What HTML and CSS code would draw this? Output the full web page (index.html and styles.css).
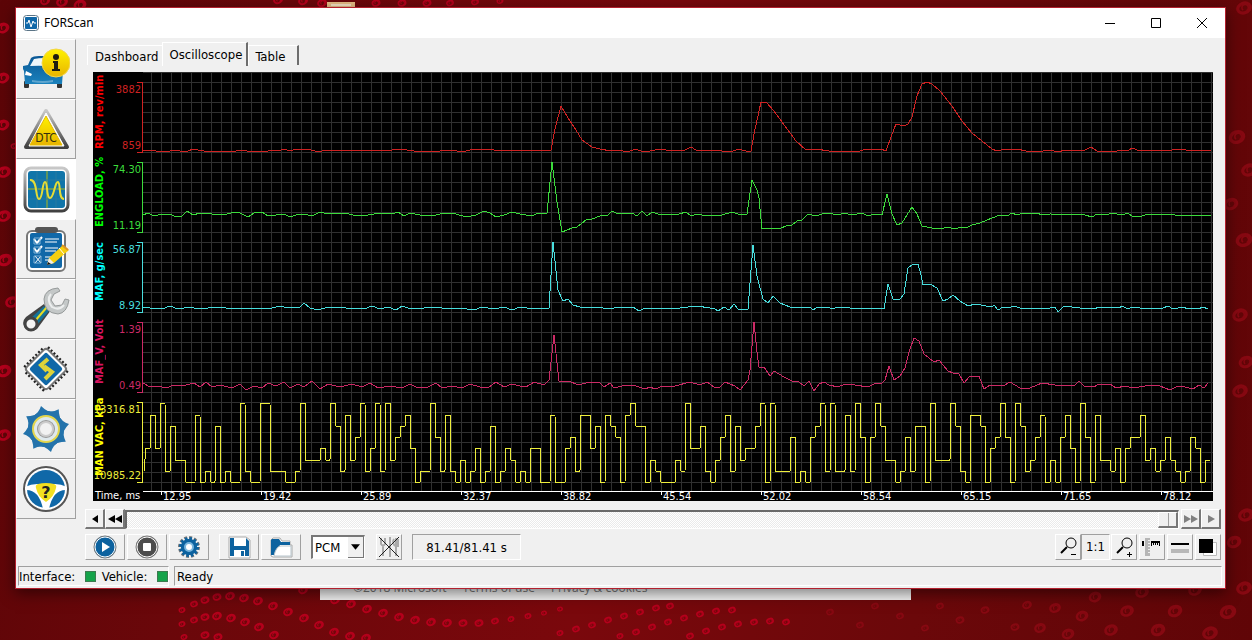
FILE: index.html
```html
<!DOCTYPE html>
<html lang="en">

<head>
    <meta charset="UTF-8">
    <meta name="viewport" content="width=device-width, initial-scale=1.0">
    <link rel="stylesheet" href="styles.css">
    <title>FORScan</title>
</head>

<body>
    <svg id="wallpaper" class="wallpaper" viewBox="0 0 1252 640" preserveAspectRatio="xMidYMin slice" aria-hidden="true">
        <defs>
            <g id="swirl" fill="none">
                <ellipse rx="4" ry="3" stroke-width="2" />
                <path d="M-1 1a2 2 0 1 1 2 1" stroke-width="1" />
            </g>
        </defs>
        <rect x="327" y="2" width="28" height="6" fill="#e8bd86" />
        <path d="M331 5h20" stroke="#f7e4c6" stroke-width="2" />
    </svg>

    <main class="window">
        <header class="titlebar">
            <svg class="app-icon" viewBox="0 0 16 16" aria-hidden="true">
                <rect x="0.5" y="0.5" width="15" height="15" rx="3" fill="#fff" stroke="#5b7486" />
                <rect x="2" y="2" width="12" height="12" rx="1" fill="#1068a8" />
                <path d="M3 8h2l1-3 2 7 2-6 1 2h2" fill="none" stroke="#fff" />
            </svg>
            <h1>FORScan</h1>
            <div class="window-buttons">
                <button aria-label="Minimize"><svg viewBox="0 0 10 10"><path d="M0 5.5h10" /></svg></button>
                <button aria-label="Maximize"><svg viewBox="0 0 10 10"><path d="M.5 .5h9v9h-9z" /></svg></button>
                <button aria-label="Close"><svg viewBox="0 0 10 10"><path d="M0 0l10 10M10 0L0 10" /></svg></button>
            </div>
        </header>

        <div class="workspace">
            <nav class="sidebar">
                <button aria-label="Vehicle information">
                    <svg viewBox="0 0 48 48">
                        <defs>
                            <linearGradient id="blue" x2="0" y2="1"><stop stop-color="#0a5795" /><stop offset="1" stop-color="#1b82bd" /></linearGradient>
                            <linearGradient id="yellow" x2="0" y2="1"><stop stop-color="#fff200" /><stop offset="1" stop-color="#e8b400" /></linearGradient>
                            <linearGradient id="steel" x2="0" y2="1"><stop stop-color="#c8c8c8" /><stop offset="1" stop-color="#404040" /></linearGradient>
                        </defs>
                        <rect x="2" y="36" width="5" height="7" rx="1" fill="#333" />
                        <rect x="35" y="36" width="5" height="7" rx="1" fill="#333" />
                        <path d="M1 21l5-1 3-7q2-2 8-2h14l6 10 4 5-1 13H3l-1-13-1-2z" fill="url(#blue)" />
                        <path d="M8 21l4-7q10-2 19 0l3 8q-13-2-26-1z" fill="#eef6fa" />
                        <path d="M4 26l6 3-1 2-6-1zM31 29l7-3v4l-7 1z" fill="#fff" />
                        <path d="M10 35q11 2 21 0v2q-10 2-21 0z" fill="#5fa6cf" />
                        <circle cx="34" cy="18" r="14" fill="url(#yellow)" stroke="#f3d64a" />
                        <circle cx="34" cy="12" r="3" fill="#1c1c10" />
                        <path d="M31 16h5v8h2v2h-8v-2h2v-6h-1z" fill="#1c1c10" />
                    </svg>
                </button>
                <button aria-label="DTC">
                    <svg viewBox="0 0 48 48">
                        <path d="M24 6L45 42H4z" fill="#fff" stroke="url(#steel)" stroke-width="4" stroke-linejoin="round" />
                        <path d="M24 8L42 41H7z" fill="#fff" stroke="#fff" stroke-linejoin="round" />
                        <path d="M24 11L40 40H8z" fill="url(#yellow)" stroke="#e6bb00" stroke-linejoin="round" />
                        <text x="24" y="37" text-anchor="middle" class="dtc-text">DTC</text>
                    </svg>
                </button>
                <button class="active" aria-label="Oscilloscope">
                    <svg viewBox="0 0 48 48">
                        <rect x="3" y="3" width="43" height="43" rx="6" fill="#fff" stroke="url(#steel)" stroke-width="3" />
                        <rect x="6" y="6" width="37" height="37" rx="3" fill="#1175a9" />
                        <path d="M6 24h37M25 6v37" stroke="#5f9560" stroke-width="2" />
                        <path d="M6 15h37M6 34h37M15 6v37M34 6v37" stroke="#287aa0" />
                        <path d="M8 15c8-1 5 19 9 19s3-17 6-17 1 16 5 16 5-17 8-16 0 17 6 17" fill="none" stroke="#e6dc35" stroke-width="2" />
                    </svg>
                </button>
                <button aria-label="Tests">
                    <svg viewBox="0 0 48 48">
                        <rect x="5" y="6" width="38" height="40" rx="5" fill="#fff" stroke="#777" stroke-width="2" />
                        <rect x="8" y="8" width="32" height="35" rx="2" fill="#1068a8" />
                        <rect x="13" y="2" width="23" height="6" rx="3" fill="#555" />
                        <g fill="none" stroke="#fff">
                            <path d="M23 14h14M23 17h12M23 23h13M23 26h11M23 32h8M23 35h6" />
                            <path d="M12 14l3 4 5-6M12 23l3 4 5-6" stroke-width="2" />
                            <path d="M13 31l6 7M19 31l-6 7" />
                            <path d="M12 13h6v6h-6zM12 22h6v6h-6zM12 31h7v7h-7z" stroke="#7fb2d6" />
                        </g>
                        <path d="M25 40l2-7 14-13 6 5-15 13z" fill="#f5cf10" />
                        <path d="M25 40l2-7 5 5z" fill="#eee" />
                        <path d="M25 40l1-3 3 2z" fill="#111" />
                        <path d="M37 23l5 6" stroke="#fff" />
                        <path d="M40 20l6 5" stroke="#e09422" stroke-width="2" />
                    </svg>
                </button>
                <button aria-label="Service functions">
                    <svg viewBox="0 0 48 48">
                        <path d="M22 19l7 6-14 19q-6 4-12-1-4-6 1-11z" fill="#444" />
                        <path d="M22 21l5 5-12 14-6-7z" fill="#147398" />
                        <path d="M25 22L13 36" stroke="#e7dd23" stroke-width="2" />
                        <circle cx="9" cy="39" r="6" fill="#f4f4f4" stroke="#444" stroke-width="3" />
                        <path d="M36 3Q23 4 22 14q0 14 14 15 9-1 11-14l-4-1-3 6-7 1-4-6 3-6 6-3z" fill="#c4c8c8" stroke="#969a9a" />
                        <path d="M29 9q-5 6 1 13 7 4 12-2" fill="none" stroke="#eceeee" stroke-width="2" />
                    </svg>
                </button>
                <button aria-label="Module configuration">
                    <svg viewBox="0 0 48 48">
                        <g transform="rotate(45 24 24)">
                            <rect x="10" y="10" width="28" height="28" fill="none" stroke="#222" stroke-width="8" stroke-dasharray="2 2" />
                            <rect x="9" y="9" width="30" height="30" rx="3" fill="#fff" stroke="#777" stroke-width="2" />
                            <rect x="12" y="12" width="24" height="24" rx="2" fill="#1068a8" />
                        </g>
                        <path d="M26 14l-7 6 6 6M22 21l8 6-7 7" fill="none" stroke="#ddd33a" stroke-width="4" />
                    </svg>
                </button>
                <button aria-label="Settings">
                    <svg viewBox="0 0 48 48">
                        <defs>
                            <path id="tooth" d="M10 12Q17 8 19 1Q25 7 34 9L24 24z" fill="#2473ab" />
                        </defs>
                        <use href="#tooth" />
                        <use href="#tooth" transform="rotate(45 24 24)" />
                        <use href="#tooth" transform="rotate(90 24 24)" />
                        <use href="#tooth" transform="rotate(135 24 24)" />
                        <use href="#tooth" transform="rotate(180 24 24)" />
                        <use href="#tooth" transform="rotate(225 24 24)" />
                        <use href="#tooth" transform="rotate(270 24 24)" />
                        <use href="#tooth" transform="rotate(315 24 24)" />
                        <circle cx="24" cy="24" r="18" fill="#2473ab" />
                        <circle cx="24" cy="24" r="13" fill="#dfe9ed" stroke="#e3d64e" stroke-width="2" />
                        <circle cx="24" cy="24" r="9" fill="#999" />
                        <circle cx="24" cy="24" r="7" fill="#f2f2f2" stroke="#ccc" stroke-width="2" />
                    </svg>
                </button>
                <button aria-label="Help">
                    <svg viewBox="0 0 48 48">
                        <circle cx="24" cy="24" r="22" fill="#fff" stroke="#555" stroke-width="2" />
                        <circle cx="24" cy="24" r="19" fill="#1068a8" />
                        <path d="M3 22q6-3 12-3h18q6 0 12 3v3q-14-1-18 19h-6Q17 24 3 25z" fill="#fff" />
                        <path d="M16 19q8-2 16 0 3 1 2 4-2 9-10 14-8-5-10-14-1-3 2-4z" fill="#f2df20" />
                        <text x="24" y="33" text-anchor="middle" class="help-text">?</text>
                    </svg>
                </button>
            </nav>

            <section class="content">
                <div class="tabs">
                    <button class="tab">Dashboard</button>
                    <button class="tab selected">Oscilloscope</button>
                    <button class="tab">Table</button>
                </div>

                <div class="scope">
                    <div class="channels">
                        <div class="channel rpm"><b>RPM, rev/min</b><div class="range"><span>3882</span><span>859</span></div></div>
                        <div class="channel load"><b>ENGLOAD, %</b><div class="range"><span>74.30</span><span>11.19</span></div></div>
                        <div class="channel maf"><b>MAF, g/sec</b><div class="range"><span>56.87</span><span>8.92</span></div></div>
                        <div class="channel volt"><b>MAF_V, Volt</b><div class="range"><span>1.39</span><span>0.49</span></div></div>
                        <div class="channel vac"><b>MAN VAC, kPa</b><div class="range"><span>13316.81</span><span>10985.22</span></div></div>
                    </div>
                    <div class="plot">
                        <svg id="traces"></svg>
                    </div>
                    <div class="axis-name">Time, ms</div>
                    <div class="axis" id="axis"></div>
                </div>

                <div class="scroll-row">
                    <button class="raised" aria-label="Back"><svg viewBox="0 0 16 10"><path d="M5 5l6-4v8z" /></svg></button>
                    <button class="raised" aria-label="Fast back"><svg viewBox="0 0 16 10"><path d="M1 5l7-4v8zM8 5l7-4v8z" /></svg></button>
                    <input type="range" aria-label="Position" min="0" max="8141" value="8141">
                    <button class="raised dim" aria-label="Fast forward"><svg viewBox="0 0 16 10"><path d="M1 1l7 4-7 4zM8 1l7 4-7 4z" /></svg></button>
                    <button class="raised dim" aria-label="Forward"><svg viewBox="0 0 16 10"><path d="M5 1l7 4-7 4z" /></svg></button>
                </div>

                <div class="toolbar">
                    <div class="group">
                        <button class="raised wide" aria-label="Start">
                            <svg viewBox="0 0 24 24"><circle cx="12" cy="12" r="11" fill="#0c629f" stroke="#777" /><circle cx="12" cy="12" r="10" fill="none" stroke="#fff" /><path d="M9 7l8 5-8 5z" fill="#fff" /></svg>
                        </button>
                        <button class="raised wide" aria-label="Stop">
                            <svg viewBox="0 0 24 24"><circle cx="12" cy="12" r="11" fill="#4d4d4d" stroke="#777" /><circle cx="12" cy="12" r="10" fill="none" stroke="#fff" /><rect x="8" y="8" width="8" height="8" rx="1" fill="#fff" /></svg>
                        </button>
                        <button class="raised wide" aria-label="Options">
                            <svg viewBox="0 0 24 24"><circle cx="12" cy="12" r="9" fill="none" stroke="#777" stroke-width="4" stroke-dasharray="2.7 2" /><circle cx="12" cy="12" r="8" fill="#0c629f" stroke="#0c629f" stroke-width="4" stroke-dasharray="2.4 1.8" /><circle cx="12" cy="12" r="8" fill="#0c629f" /><circle cx="12" cy="12" r="4" fill="#fff" stroke="#79b5dc" stroke-width="2" /></svg>
                        </button>
                    </div>
                    <div class="group">
                        <button class="raised wide" aria-label="Save">
                            <svg viewBox="0 0 24 24"><path d="M2 2h17l4 3v18H2z" fill="#fff" stroke="#aaa" /><path d="M3 3h4v8h12V3l3 3v15H3z" fill="#0c629f" /><path d="M7 15h11v7H7z" fill="#fff" /><path d="M14 16h3v5h-3z" fill="#0c629f" /></svg>
                        </button>
                        <button class="raised wide" aria-label="Open">
                            <svg viewBox="0 0 24 24"><path d="M2 21V5l2-2h7l2 3h8v4h2v12H4z" fill="#fff" stroke="#aaa" /><path d="M2 20V5l1-1h7l2 3h9v3H11l-6 10z" fill="#0c629f" /><path d="M5 21q2-10 7-10h10v10z" fill="#fff" stroke="#b8c5cc" /></svg>
                        </button>
                    </div>
                    <div class="module">
                        <select aria-label="Module"><option>PCM</option></select>
                        <svg viewBox="0 0 10 6" aria-hidden="true"><path d="M0 0h10L5 6z" /></svg>
                    </div>
                    <button class="raised" aria-label="Hide controls">
                        <svg viewBox="0 0 22 22"><path d="M3 2v6q2 3 4 0V2M5 9v11M12 1v20M18 2v18M16 3q-2 4 1 7M20 3v8" fill="none" stroke="#aaa" stroke-width="2" /><path d="M1 1l20 20M21 1L1 21" stroke="#222" /></svg>
                    </button>
                    <output class="time">81.41/81.41 s</output>
                    <div class="view-tools">
                        <button class="raised" aria-label="Zoom out">
                            <svg viewBox="0 0 22 22"><circle cx="14" cy="7" r="5" fill="none" stroke="#000" /><path d="M10 11l-6 6" stroke="#000" stroke-width="2" /><path d="M14 18.5h5" stroke="#000" /></svg>
                        </button>
                        <button class="sunken">1:1</button>
                        <button class="raised" aria-label="Zoom in">
                            <svg viewBox="0 0 22 22"><circle cx="14" cy="7" r="5" fill="none" stroke="#000" /><path d="M10 11l-6 6" stroke="#000" stroke-width="2" /><path d="M14 18.5h5M16.5 16v5" stroke="#000" /></svg>
                        </button>
                        <button class="raised" aria-label="Rulers">
                            <svg viewBox="0 0 22 22"><path d="M4 2h5v18H4z" fill="#b5b5b5" /><path d="M7 4.5h2M7 7.5h2M7 10.5h2M7 13.5h2M7 16.5h2" stroke="#eee" /><path d="M1 5h2v5H1z" /><path d="M10 5h9v2h-9zM10 7h1v3h-1zM12 7h1v2h-1zM14 7h1v2h-1zM16 7h1v2h-1zM18 7h1v3h-1z" /></svg>
                        </button>
                        <button class="raised" aria-label="Line width">
                            <svg viewBox="0 0 22 22"><path d="M2 7h18v2H2z" /><path d="M2 13h18v4H2z" fill="#b8b8b8" /></svg>
                        </button>
                        <button class="raised" aria-label="Background">
                            <svg viewBox="0 0 22 22"><path d="M6.5 6.5h13v13h-13z" fill="#fff" stroke="#bbb" /><path d="M2 3h14v14H2z" /></svg>
                        </button>
                    </div>
                </div>
            </section>
        </div>

        <footer class="statusbar">
            <div class="links"><span>Interface:</span><i></i><span>Vehicle:</span><i></i></div>
            <div class="message">Ready</div>
        </footer>
    </main>

    <div class="page-behind">
        <a href="#">©2018 Microsoft</a><a href="#">Terms of use</a><a href="#">Privacy &amp; cookies</a>
    </div>

    <script src="scope.js"></script>
</body>

</html>
```
FILE: styles.css
```css
* {
    box-sizing: border-box;
}

body {
    margin: 0;
    padding: 7px 26px 0 15px;
    min-height: 100vh;
    overflow: hidden;
    background: linear-gradient(100deg, #5c0507, #6a070a 20%, #7a080c 50%, #6b080a 75%, #600507);
    font-family: "DejaVu Sans Condensed", "DejaVu Sans", sans-serif;
    font-stretch: condensed;
    font-size: 13px;
    line-height: 16px;
    color: #000;
}

button,
select {
    font: inherit;
    color: inherit;
    margin: 0;
    padding: 0;
    border: 0;
    border-radius: 0;
    background: #f0f0f0;
}

svg {
    display: block;
}

.wallpaper {
    position: absolute;
    z-index: -2;
    top: 0;
    left: 0;
    width: 100%;
    height: 100%;
}

.window {
    background: #f0f0f0;
    border: 1px solid #b3202e;
    box-shadow: 0 4px 14px rgba(0, 0, 0, 0.5);
}

/* title bar */
.titlebar {
    display: flex;
    align-items: center;
    height: 30px;
    padding-left: 7px;
    background: #fff;
}

.titlebar h1 {
    margin: 0 auto 0 5px;
    font: 12px/16px "Noto Sans", "Open Sans", sans-serif;
}

.app-icon {
    width: 16px;
    height: 16px;
}

.window-buttons {
    display: flex;
}

.window-buttons button {
    width: 46px;
    height: 30px;
    background: #fff;
}

.window-buttons svg {
    width: 10px;
    height: 10px;
    margin: 0 auto;
    fill: none;
    stroke: #000;
}

/* sidebar */
.workspace {
    display: flex;
}

.sidebar {
    flex: none;
    width: 61px;
    padding-top: 1px;
}

.sidebar button {
    display: block;
    width: 60px;
    height: 60px;
    border: 1px solid #fff;
    border-right-color: #a0a0a0;
    border-bottom-color: #a0a0a0;
}

.sidebar button.active {
    background: #fff;
    border-color: #fff;
}

.sidebar svg {
    width: 48px;
    height: 48px;
    margin: 0 auto;
}

.dtc-text {
    font: 12px "DejaVu Sans Condensed", sans-serif;
    font-stretch: condensed;
    fill: #33300c;
}

.help-text {
    font: bold 16px "DejaVu Sans", sans-serif;
    fill: #222;
}

.content {
    flex: 1;
    min-width: 0;
}

/* tabs */
.tabs {
    display: flex;
    height: 34px;
    padding: 4px 0 0 10px;
}

.tab {
    height: 20px;
    margin-top: 3px;
    padding: 2px 4px 0 7px;
    border-top: 1px solid #fff;
    border-left: 1px solid #fff;
}

.tab.selected {
    height: 24px;
    margin-top: 0;
    padding: 0 4px 0 6px;
    border-right: 2px solid #6d6d6d;
}

.tab:last-child {
    padding-right: 12px;
    padding-left: 6px;
    border-right: 2px solid #6d6d6d;
}

/* oscilloscope */
.scope {
    display: grid;
    grid-template-columns: 50px 1fr;
    grid-template-rows: 419px 10px;
    margin: 0 12px 0 16px;
    background: #000;
}

.channel {
    position: relative;
    display: flex;
    height: 80px;
    padding-top: 11px;
    color: var(--trace);
    font-size: 11px;
    line-height: 14px;
}

.channel b {
    position: absolute;
    top: 0;
    left: 0;
    height: 100%;
    width: 14px;
    text-align: center;
    white-space: nowrap;
    writing-mode: vertical-rl;
    transform: rotate(180deg);
    color: var(--name);
}

.range {
    flex: 1;
    display: flex;
    flex-direction: column;
    justify-content: space-between;
    align-items: flex-end;
    margin-bottom: -1px;
    padding-right: 2px;
}

.range::after {
    content: "";
    position: absolute;
    top: 10px;
    right: 0;
    bottom: -1px;
    width: 5px;
    border: 1px solid var(--trace);
    border-left: 0;
}

.rpm { --trace: #d02222; --name: #ff0000; }
.load { --trace: #3cdc3c; --name: #00ff00; }
.maf { --trace: #48dede; --name: #00ffff; }
.volt { --trace: #cc2a66; --name: #d8145f; }
.vac { --trace: #eeee3c; --name: #ffff00; height: 90px; }

.plot {
    overflow: hidden;
    background-image:
        linear-gradient(to right, #303030 1px, transparent 1px),
        linear-gradient(#303030 1px, transparent 1px);
    background-size: 10px 10px;
    background-position: 8px 0;
}

.plot svg {
    width: 100%;
    height: 100%;
}

.plot polyline {
    fill: none;
    stroke: var(--trace);
    stroke-width: 1;
    shape-rendering: crispEdges;
}

.axis-name,
.axis {
    font-size: 11px;
    line-height: 9px;
    color: #fff;
}

.axis-name {
    padding-left: 2px;
}

/* one label for every ten grid cells */
.axis {
    display: flex;
    min-width: 0;
    padding-left: 18px;
    border-top: 1px solid #fff;
}

.axis span {
    flex: 0 0 100px;
    display: flex;
}

.axis span:last-child {
    flex-basis: 40px;
}

.axis span::before {
    content: "";
    width: 1px;
    height: 3px;
    margin-right: 1px;
    background: #fff;
}

/* raised and sunken controls */
.raised {
    flex: none;
    width: 26px;
    height: 26px;
    border: 1px solid #fff;
    border-right-color: #a0a0a0;
    border-bottom-color: #a0a0a0;
}

.raised svg {
    width: 22px;
    height: 22px;
    margin: 0 auto;
}

.raised.wide {
    width: 40px;
}

.raised.wide svg {
    width: 24px;
    height: 24px;
}

.sunken {
    width: 29px;
    height: 26px;
    border: 1px solid #fff;
    border-left-color: #a0a0a0;
    border-top-color: #a0a0a0;
}

.scroll-row {
    display: flex;
    align-items: center;
    margin: 8px 4px 0 8px;
}

.scroll-row .raised {
    width: 20px;
    height: 20px;
    border-right: 2px solid #777;
    border-bottom: 2px solid #777;
}

.scroll-row .raised svg {
    width: 16px;
    height: 10px;
}

.scroll-row .dim {
    fill: #808080;
}

.scroll-row input {
    flex: 1;
    min-width: 0;
    height: 19px;
    margin: 0 2px 0 0;
    border: 1px solid #fff;
    border-left: 2px solid #6a6a6a;
    border-top: 2px solid #6a6a6a;
    appearance: none;
    background: repeating-conic-gradient(#fff 0 25%, #eaeaea 0 50%) 0 0 / 2px 2px;
}

.scroll-row input::-webkit-slider-thumb {
    appearance: none;
    width: 20px;
    height: 16px;
    border: 1px solid #fff;
    border-right: 2px solid #777;
    border-bottom: 2px solid #777;
    background: linear-gradient(to right, #f0f0f0 9px, #a0a0a0 9px, #a0a0a0 10px, #f0f0f0 10px);
}

/* toolbar */
.toolbar {
    display: flex;
    align-items: center;
    margin: 5px 4px 0 8px;
}

.group {
    display: flex;
    gap: 2px;
    margin-right: 10px;
}

.module {
    position: relative;
    width: 54px;
    margin-right: 11px;
}

.module select {
    display: block;
    width: 100%;
    height: 24px;
    padding-left: 2px;
    appearance: none;
    background: #fff;
    border: 1px solid #fff;
    border-top: 2px solid #777;
    border-left: 2px solid #777;
}

.module svg {
    position: absolute;
    top: 2px;
    right: 1px;
    width: 16px;
    height: 21px;
    padding: 0 3px;
    background: #f0f0f0;
    border-right: 1px solid #777;
    border-bottom: 1px solid #777;
    pointer-events: none;
}

.time {
    width: 109px;
    height: 26px;
    margin-left: 10px;
    line-height: 26px;
    text-align: center;
    border: 1px solid #fff;
    border-left-color: #a0a0a0;
    border-top-color: #a0a0a0;
}

.view-tools {
    display: flex;
    gap: 2px;
    margin-left: auto;
}

.view-tools .sunken {
    margin: 0 -1px 0 -2px;
}

/* status bar */
.statusbar {
    display: flex;
    gap: 5px;
    margin: 6px 3px 2px 2px;
}

.statusbar > div {
    height: 20px;
    line-height: 19px;
    border: 1px solid #fff;
    border-left-color: #a0a0a0;
    border-top-color: #a0a0a0;
}

.links {
    display: flex;
    align-items: center;
    justify-content: space-between;
    width: 151px;
}

.links i {
    width: 11px;
    height: 11px;
    background: #15a34a;
    border: 1px solid #3d7a50;
}

.links span + i + span {
    margin-left: -4px;
}

.message {
    flex: 1;
    padding-left: 2px;
}

/* strip of the browser page under the window */
.page-behind {
    position: relative;
    z-index: -1;
    display: flex;
    align-items: flex-end;
    gap: 16px;
    width: 591px;
    max-width: 60%;
    height: 11px;
    margin-left: 305px;
    padding: 0 0 2px 33px;
    background: #f2f2f2;
    font: 12px/20px "Open Sans", "Noto Sans", sans-serif;
}

.page-behind a {
    color: #777;
    text-decoration: none;
}
```
FILE: scope.js
```js
const svgNS = "http://www.w3.org/2000/svg";

const originX = 143;
const originY = 72;

const traces = {
    rpm: "143,150 148,151 152,150 156,151 170,151 174,150 180,151 188,151 193,149 198,150 204,151 225,151 236,151 242,150 247,151 268,151 274,150 278,151 284,149 290,151 296,149 308,149 318,152 326,150 340,151 352,150 372,151 392,150 400,149 414,151 440,151 452,150 462,152 470,150 490,149 498,151 506,150 530,150 540,151 551,150 555,129 561,106 568,118 576,130 582,140 592,147 600,149 611,151 619,150 627,152 636,149 643,152 650,151 660,149 672,151 685,150 691,147 696,150 705,151 712,150 722,151 731,152 738,149 746,151 751,151 754,134 761,102 766,102 774,111 782,122 796,141 806,150 816,149 829,151 860,151 866,149 871,150 881,149 886,151 891,137 896,124 904,126 908,124 912,117 917,96 922,84 927,82 932,84 940,91 952,106 962,121 972,133 982,141 992,149 997,151 1005,149 1017,149 1026,151 1036,152 1050,150 1058,152 1065,150 1085,150 1091,147 1097,151 1117,151 1122,150 1128,151 1132,148 1140,151 1155,150 1165,151 1180,149 1192,151 1211,150",
    load: "143,215 148,213 154,216 162,214 170,214 176,217 182,216 187,211 193,215 200,213 212,214 224,215 234,212 240,213 248,217 254,213 262,212 268,216 276,215 284,214 290,217 296,215 304,214 312,216 320,212 328,214 346,213 356,216 368,215 380,213 392,214 398,212 404,216 410,213 420,215 436,215 444,213 456,214 466,217 476,215 484,211 490,213 496,217 504,215 512,212 520,214 532,216 538,213 547,213 552,162 557,202 562,232 572,228 577,227 581,224 587,219 592,219 600,216 608,215 612,211 618,214 632,213 637,216 642,211 647,216 652,212 658,214 679,214 686,212 691,216 697,214 702,215 722,215 732,212 738,214 747,214 752,180 757,190 759,198 762,229 781,228 786,226 792,225 797,221 802,220 808,214 816,216 822,214 827,213 833,214 838,215 844,213 852,215 862,213 868,216 874,214 882,215 887,194 892,214 897,225 902,223 912,207 917,214 922,226 932,228 940,229 948,227 954,229 962,227 968,227 972,225 980,223 992,218 1000,215 1007,216 1012,213 1017,215 1023,213 1037,213 1042,215 1050,214 1085,215 1092,217 1097,214 1106,215 1112,213 1122,215 1128,213 1132,216 1142,216 1148,214 1155,215 1165,214 1175,215 1185,216 1195,215 1211,215",
    maf: "143,307 150,308 162,309 170,306 178,309 190,307 198,309 208,308 220,307 232,309 244,308 256,308 268,309 280,306 288,308 300,307 304,303 310,308 318,310 328,307 346,308 364,309 372,306 380,309 388,307 396,310 402,306 408,308 424,308 436,307 448,309 460,308 474,310 482,307 494,309 504,307 512,310 520,307 533,309 538,308 542,309 549,308 553,242 558,290 563,301 568,299 573,305 580,307 595,307 610,309 618,307 625,308 633,307 639,311 645,308 660,309 668,308 680,308 697,306 710,308 714,308 718,311 724,307 729,310 734,304 738,309 748,309 753,245 757,276 763,299 768,303 773,296 780,303 790,307 810,307 813,310 818,307 828,307 832,309 838,307 850,308 857,309 870,308 880,308 884,309 888,284 893,299 900,299 904,294 908,268 913,264 918,264 921,275 923,285 930,284 937,288 943,301 948,299 953,295 960,301 968,306 975,304 992,307 994,305 998,310 1003,307 1008,308 1014,306 1020,308 1045,309 1055,307 1058,312 1064,306 1080,308 1093,309 1100,307 1118,308 1123,306 1127,309 1133,307 1140,308 1163,308 1168,306 1173,309 1183,307 1188,309 1194,308 1198,309 1203,307 1208,309",
    volt: "143,383 150,387 158,386 166,388 174,385 182,386 194,383 200,387 206,382 212,387 220,385 232,388 240,384 246,390 254,386 262,388 268,383 276,386 284,382 290,388 298,384 304,387 312,381 320,389 328,384 340,387 352,384 362,387 370,383 378,388 390,386 402,388 410,384 418,388 428,387 436,383 442,388 452,386 462,388 470,384 480,387 488,388 496,382 504,387 512,384 520,386 526,387 534,382 544,385 549,380 554,335 559,381 569,381 578,385 590,382 599,382 604,387 610,383 614,388 622,386 630,385 636,386 645,389 650,387 655,389 663,386 675,386 690,382 700,385 707,382 714,387 720,387 725,382 730,384 735,386 740,390 748,380 750,370 754,322 757,352 759,367 764,367 770,376 774,371 784,377 792,381 799,382 804,386 809,381 814,391 819,384 824,382 829,385 838,387 845,384 855,385 868,387 874,384 882,383 885,380 889,366 894,380 900,376 905,368 909,352 914,338 919,341 924,354 934,362 939,360 948,371 953,373 959,374 964,383 969,377 979,376 984,389 990,385 1000,386 1005,385 1010,382 1020,388 1030,388 1042,383 1055,385 1075,385 1079,381 1084,386 1094,387 1099,384 1105,385 1110,384 1116,388 1125,386 1133,388 1145,386 1153,385 1160,386 1170,390 1178,386 1185,387 1193,389 1199,385 1204,388 1208,383"
};

// Manifold vacuum is a stepped signal: one level (0 top, 7 bottom) every 5px
const vacLevels = `
    4 1 4 0 6 2 55 77 1 7 6 7 2 7 6 77 0 6 77 00 666 77 6 0 555 4 5 0 2 6 1 5 3 0 6 4 0 6 0 5 3 2 1 4 7 66 0 3 6 1 6 7 5 7
    6 4 7 6 2 7 6 4 5 7 6 7 44 77 1 77 4 3 6 11 4 2 7 1 2 3 7 1 0 22 7 5 6 777 5 6 0 44 2 6 7 5 3 1 6 2 5 44 2 0 7 0 666 3 7 6 7 3 2 0 6 0 66
    1 6 0 3 7 3 0 2 55 7 6 3 6 22 7 0 555 0 2 6 7 11 2 7 4 3 0 3 7 0 2 6 5 3 1 7 5 7 3 1 4 7 0 3 7 1 55 6 4 7 4 33 1 5 4 6 5 3 5 6 7 6 3 4 7 5
`.replace(/\s/g, "");
const levelY = [403, 415, 426, 437, 448, 460, 471, 482];

function addTrace(name, points) {
    const line = document.createElementNS(svgNS, "polyline");
    line.setAttribute("class", name);
    line.setAttribute("points", points);
    line.setAttribute("transform", `translate(${-originX} ${-originY})`);
    document.getElementById("traces").appendChild(line);
}

function stepPoints(levels) {
    let points = "144,460 144,471";
    [...levels].forEach((level, i) => {
        const x = 146 + i * 5;
        points += ` ${x},${levelY[level]} ${x + 4},${levelY[level]}`;
    });
    return points;
}

for (const name in traces) {
    addTrace(name, traces[name]);
}
addTrace("vac", stepPoints(vacLevels));

// Time axis
const times = ["12.95", "19.42", "25.89", "32.37", "38.82", "45.54", "52.02", "58.54", "65.15", "71.65", "78.12"];
times.forEach(time => {
    const label = document.createElement("span");
    label.innerText = time;
    document.getElementById("axis").appendChild(label);
});

// Wallpaper swirls: x, y, scale
const bright = [
    [182, 610, .7], [194, 604, .8], [205, 600, .9], [217, 597, .9], [230, 596, 1], [244, 598, 1], [258, 601, 1], [273, 606, 1], [288, 612, 1], [304, 618, 1], [319, 625, 1], [334, 632, 1],
    [182, 624, .7], [194, 620, .8], [205, 617, .9], [217, 616, 1], [231, 618, 1], [245, 622, 1], [259, 627, 1], [274, 635, 1], [184, 637, .7], [205, 635, .9], [218, 637, .9],
    [303, 590, 1], [335, 600, 1], [351, 604, 1], [367, 609, 1], [383, 613, 1], [399, 617, 1], [415, 620, 1], [431, 622, 1], [447, 623, 1], [463, 623, .9], [479, 623, .9], [495, 621, .8], [511, 619, .7], [528, 616, .7], [544, 613, .6], [560, 609, .6],
    [350, 636, 1], [366, 638, 1], [560, 633, .7], [576, 629, .8], [592, 625, .8], [608, 620, .8], [624, 616, .8], [640, 612, .8], [656, 608, .8], [670, 606, .8],
    [620, 636, .7], [636, 632, .8], [652, 627, .8], [668, 622, .8], [684, 618, .8], [700, 614, .8], [716, 611, .8], [732, 610, .8],
    [690, 636, .8], [706, 631, .8], [722, 627, .8], [738, 624, .8], [754, 622, .8], [770, 621, .8], [786, 622, .8],
    [3, 28, 1.3], [3, 78, 1.3], [3, 125, 1.3], [14, 146, .7], [4, 172, 1.4], [4, 216, 1.4], [5, 260, 1.5], [12, 302, 1.4], [4, 371, 1.5], [4, 435, 1.4],
    [45, 1, 1], [62, 2, 1.2], [80, 5, 1.3], [278, 0, 1], [303, 1, 1], [322, 3, 1], [376, 3, .9], [402, 3, .9], [427, 3, .9], [450, 3, .8], [475, 2, .8], [500, 1, .7]
];
const dim = [
    [1027, 605, 1], [1055, 608, 1.2], [1095, 597, 1.3], [1127, 611, 1.4], [1142, 592, 1.4], [1175, 611, 1.5], [1228, 612, 1.7], [1195, 590, 1.4], [1082, 616, 1.3], [1040, 628, 1.2], [1068, 634, 1.3], [1111, 630, 1.4], [1158, 630, 1.5], [1210, 633, 1.6],
    [1015, 627, .9], [985, 610, .9], [960, 620, .9], [940, 606, .8], [925, 628, .8], [900, 616, .8], [875, 606, .8], [860, 625, .8], [830, 612, .8],
    [1244, 8, 1.6], [1237, 137, 1.7], [1249, 170, 1.6], [1231, 204, 1.5], [1244, 240, 1.7], [1240, 315, 1.6], [1246, 362, 1.5], [1240, 391, 1.6], [1234, 542, 1.5], [1246, 515, 1.6], [1244, 588, 1.6]
];

function addSwirls(list, color) {
    list.forEach(([x, y, scale]) => {
        const swirl = document.createElementNS(svgNS, "use");
        swirl.setAttribute("href", "#swirl");
        swirl.setAttribute("transform", `translate(${x} ${y}) scale(${scale}) rotate(-20)`);
        swirl.setAttribute("stroke", color);
        document.getElementById("wallpaper").appendChild(swirl);
    });
}

addSwirls(bright, "#b5001c");
addSwirls(dim, "#870912");
```
